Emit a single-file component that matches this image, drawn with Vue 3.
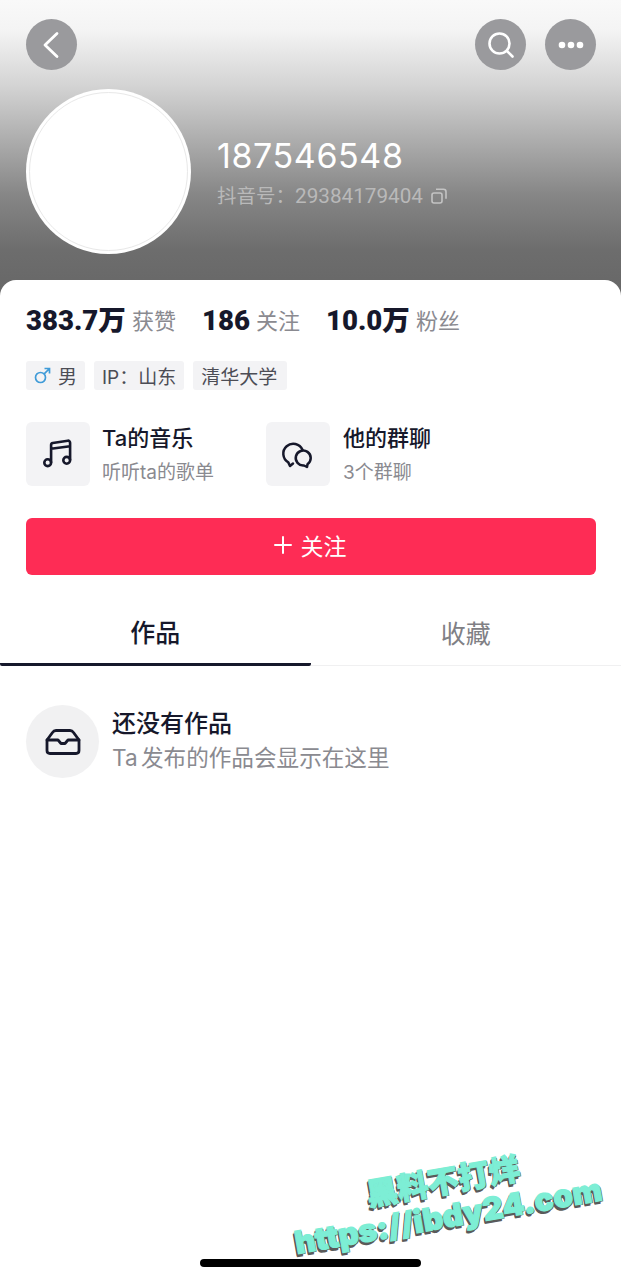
<template>
  <div class="page">
    <header class="hero">
      <div class="topbar">
        <button class="round">
          <svg width="24" height="30" viewBox="0 0 24 30" fill="none" stroke="#fff" stroke-width="2.8" stroke-linecap="round" stroke-linejoin="round"><path d="M17 3.500 5 15l12 11.500" /></svg>
        </button>
        <div class="topbar-right">
          <button class="round">
            <svg width="30" height="30" viewBox="0 0 30 30" fill="none" stroke="#fff" stroke-linecap="round"><circle cx="13.500" cy="13.500" r="10" stroke-width="2.600" /><path d="m21 21 5.500 5.500" stroke-width="2.600" /></svg>
          </button>
          <button class="round">
            <svg width="28" height="10" viewBox="0 0 28 10" fill="#fff"><circle cx="5" cy="5" r="3.300" /><circle cx="14" cy="5" r="3.300" /><circle cx="23" cy="5" r="3.300" /></svg>
          </button>
        </div>
      </div>
      <div class="profile">
        <div class="avatar"></div>
        <div class="who">
          <div class="name">187546548</div>
          <div class="uid">
            <span class="uid-label">抖音号：</span><span class="uid-num">29384179404</span>
            <svg width="16" height="16" viewBox="0 0 16 16" fill="none" stroke="#c4c4c4" stroke-width="1.600"><rect x="1" y="5" width="10" height="10" rx="2" /><path d="M5 1.200h7.500a2.500 2.500 0 0 1 2.500 2.500v7" /></svg>
          </div>
        </div>
      </div>
    </header>

    <main class="sheet">
      <div class="stats">
        <div v-for="s in stats" :key="s.label" class="stat">
          <b>{{ s.value }}</b><span>{{ s.label }}</span>
        </div>
      </div>

      <div class="tags">
        <span class="tag">
          <svg width="17" height="17" viewBox="0 0 17 17" fill="none" stroke="#3f9bd8" stroke-width="1.700"><circle cx="6.500" cy="10.500" r="5" /><path d="M10.200 6.800 15.500 1.500M10.500 1.500h5v5" /></svg>
          男
        </span>
        <span class="tag">IP：山东</span>
        <span class="tag tag-school">清华大学</span>
      </div>

      <div class="links">
        <div class="link link-music">
          <div class="link-icon">
            <svg width="30" height="30" viewBox="0 0 30 30" fill="none" stroke="#16182b" stroke-width="2.600" stroke-linejoin="round"><circle cx="4.700" cy="23.700" r="3.400" /><circle cx="23.700" cy="21.300" r="3.400" /><path d="M8.100 23.700V6a2 2 0 0 1 1.700-2l15-2.300a2 2 0 0 1 2.300 2v17.600M8.100 9.800l19-2.600" /></svg>
          </div>
          <div class="link-text">
            <div class="link-title">Ta的音乐</div>
            <div class="link-sub">听听ta的歌单</div>
          </div>
        </div>
        <div class="link">
          <div class="link-icon">
            <svg width="34" height="30" viewBox="0 0 34 30" fill="none" stroke="#16182b" stroke-width="2.500" stroke-linejoin="round" stroke-linecap="round"><path d="M21.500 10.800A10 10 0 1 0 7.300 23.400L9 27l3-2.500" /><path d="M26.500 25.200A7.500 7.500 0 1 0 23 26.500l3 1.500Z" /></svg>
          </div>
          <div class="link-text">
            <div class="link-title">他的群聊</div>
            <div class="link-sub">3个群聊</div>
          </div>
        </div>
      </div>

      <button class="follow">
        <svg width="20" height="20" viewBox="0 0 20 20" stroke="#fff" stroke-width="2" stroke-linecap="round"><path d="M10 2v16M2 10h16" /></svg>
        关注
      </button>

      <nav class="tabs">
        <div class="tab active">作品</div>
        <div class="tab">收藏</div>
      </nav>

      <section class="empty">
        <div class="empty-icon">
          <svg width="36" height="26" viewBox="0 0 36 26" fill="none" stroke="#16182b" stroke-width="2.800" stroke-linejoin="round" stroke-linecap="round"><path d="M2 11 7.500 3.500C8.300 2.300 9.500 1.500 11 1.500h14c1.500 0 2.700.8 3.500 2L34 11v10.500c0 1.700-1.300 3-3 3H5c-1.700 0-3-1.300-3-3Z" /><path d="M2 11h11l3 3.500h4l3-3.500h11" /></svg>
        </div>
        <div class="empty-text">
          <div class="empty-title">还没有作品</div>
          <div class="empty-sub">Ta 发布的作品会显示在这里</div>
        </div>
      </section>
    </main>

    <div class="watermark">
      <div class="wm-top">黑料不打烊</div>
      <div class="wm-url">https://ibdy24.com</div>
    </div>
    <div class="home-bar"></div>
  </div>
</template>

<script setup>
const stats = [
  { value: "383.7万", label: "获赞" },
  { value: "186", label: "关注" },
  { value: "10.0万", label: "粉丝" },
];
</script>

<style>
html,
body {
  margin: 0;
  background: #fff;
}
</style>

<style scoped>
.page {
  position: relative;
  width: 621px;
  height: 1280px;
  overflow: hidden;
  background: #fff;
  font-family: Inter, "Noto Sans CJK SC", sans-serif;
  color: #16182b;
}

.hero {
  height: 300px;
  padding: 19px 25px 0 26px;
  box-sizing: border-box;
  background: linear-gradient(to bottom, #f9f9f9 0, #f4f4f4 30px, #d4d4d4 85px, #adadad 140px, #868686 195px, #6d6d6d 250px, #666 300px);
}

.topbar {
  display: flex;
  justify-content: space-between;
}

.topbar-right {
  display: flex;
  gap: 19px;
}

.round {
  width: 51px;
  height: 51px;
  padding: 0;
  border: 0;
  border-radius: 50%;
  background: #9a9a9d;
  display: flex;
  align-items: center;
  justify-content: center;
}

.profile {
  display: flex;
  align-items: center;
  gap: 27px;
  margin-top: 19px;
}

.avatar {
  width: 165px;
  height: 165px;
  box-sizing: border-box;
  border-radius: 50%;
  background: #fff;
  padding: 3px;
}

.avatar::before {
  content: "";
  display: block;
  height: 100%;
  box-sizing: border-box;
  border-radius: 50%;
  border: 1px solid #e8e8e8;
}

.who {
  margin-left: -1px;
}

.name {
  font-size: 34px;
  letter-spacing: 0.6px;
  line-height: 44px;
  color: #fff;
}

.uid {
  display: flex;
  align-items: center;
  margin-top: 5px;
  line-height: 26px;
  color: #b9b9b9;
}

.uid-label {
  font-size: 19.500px;
}

.uid-num {
  font-family: Roboto, sans-serif;
  font-size: 20.700px;
  margin-right: 8px;
}

.sheet {
  position: relative;
  margin-top: -20px;
  padding-top: 20px;
  border-radius: 16px 16px 0 0;
  background: #fff;
}

.stats {
  display: flex;
  gap: 26px;
  padding-left: 26px;
  height: 42px;
  align-items: center;
}

.stat {
  display: flex;
  align-items: center;
  gap: 6px;
}

.stat b {
  font-family: Roboto, "Noto Sans CJK SC", sans-serif;
  font-size: 27.600px;
  font-weight: 900;
  line-height: 42px;
}

.stat span {
  margin-bottom: 5px;
  font-size: 22px;
  color: #8a8a90;
}

.tags {
  display: flex;
  gap: 9px;
  padding-left: 26px;
  margin-top: 19px;
}

.tag {
  display: flex;
  align-items: center;
  gap: 7px;
  height: 29px;
  padding: 0 8px;
  border-radius: 3px;
  background: #f3f3f5;
  font-size: 19px;
  color: #4c4d55;
}

.tag-school {
  padding-right: 10px;
}

.links {
  display: flex;
  height: 64px;
  padding-left: 26px;
  margin-top: 32px;
}

.link {
  display: flex;
  align-items: flex-start;
  gap: 13px;
}

.link-music {
  width: 240px;
  gap: 12px;
}

.link-icon {
  width: 64px;
  height: 64px;
  border-radius: 6px;
  background: #f3f3f5;
  display: flex;
  align-items: center;
  justify-content: center;
}

.link-title {
  font-size: 22px;
  font-weight: 500;
  line-height: 32px;
}

.link-sub {
  margin-top: 3px;
  font-size: 19px;
  line-height: 32px;
  color: #8a8a90;
}

.follow {
  display: flex;
  align-items: center;
  justify-content: center;
  gap: 8px;
  width: 570px;
  height: 57px;
  margin: 32px 0 0 26px;
  padding: 0 3px 3px 0;
  border: 0;
  border-radius: 6px;
  background: #fe2c55;
  color: #fff;
  font-family: inherit;
  font-size: 23px;
}

.tabs {
  display: flex;
  height: 90px;
  border-bottom: 1px solid #f0f0f1;
}

.tab {
  flex: 1;
  display: flex;
  align-items: center;
  justify-content: center;
  padding-top: 24px;
  box-sizing: border-box;
  font-size: 25px;
  color: #808085;
}

.tab.active {
  font-weight: 500;
  color: #16182b;
  border-bottom: 3px solid #16182b;
  margin-bottom: -1px;
  border-radius: 2px;
}

.empty {
  display: flex;
  align-items: flex-start;
  gap: 13px;
  padding-left: 26px;
  margin-top: 39px;
}

.empty-icon {
  width: 73px;
  height: 73px;
  border-radius: 50%;
  background: #f1f1f2;
  display: flex;
  align-items: center;
  justify-content: center;
}

.empty-text {
  padding-top: 2px;
}

.empty-title {
  font-size: 24px;
  font-weight: 500;
  line-height: 34px;
}

.empty-sub {
  font-size: 22.600px;
  word-spacing: -3px;
  line-height: 34px;
  color: #8a8a90;
}

.watermark {
  position: absolute;
  left: 298px;
  top: 1190px;
  transform: rotate(-10deg);
  transform-origin: 0 100%;
  font-weight: 900;
  color: #7deed5;
  -webkit-text-stroke: 1.2px #7deed5;
  text-shadow: -1px 1px 0 #5a5a5a, -2px 2px 0 #5a5a5a, -2px 3px 0 #5a5a5a, 1px 1px 0 #5a5a5a;
}

.wm-top {
  margin-left: 79px;
  font-size: 31px;
  line-height: 36px;
}

.wm-url {
  font-size: 31.400px;
  line-height: 34px;
  white-space: nowrap;
}

.home-bar {
  position: absolute;
  left: 200px;
  top: 1259px;
  width: 221px;
  height: 8px;
  border-radius: 4px;
  background: #000;
}
</style>
